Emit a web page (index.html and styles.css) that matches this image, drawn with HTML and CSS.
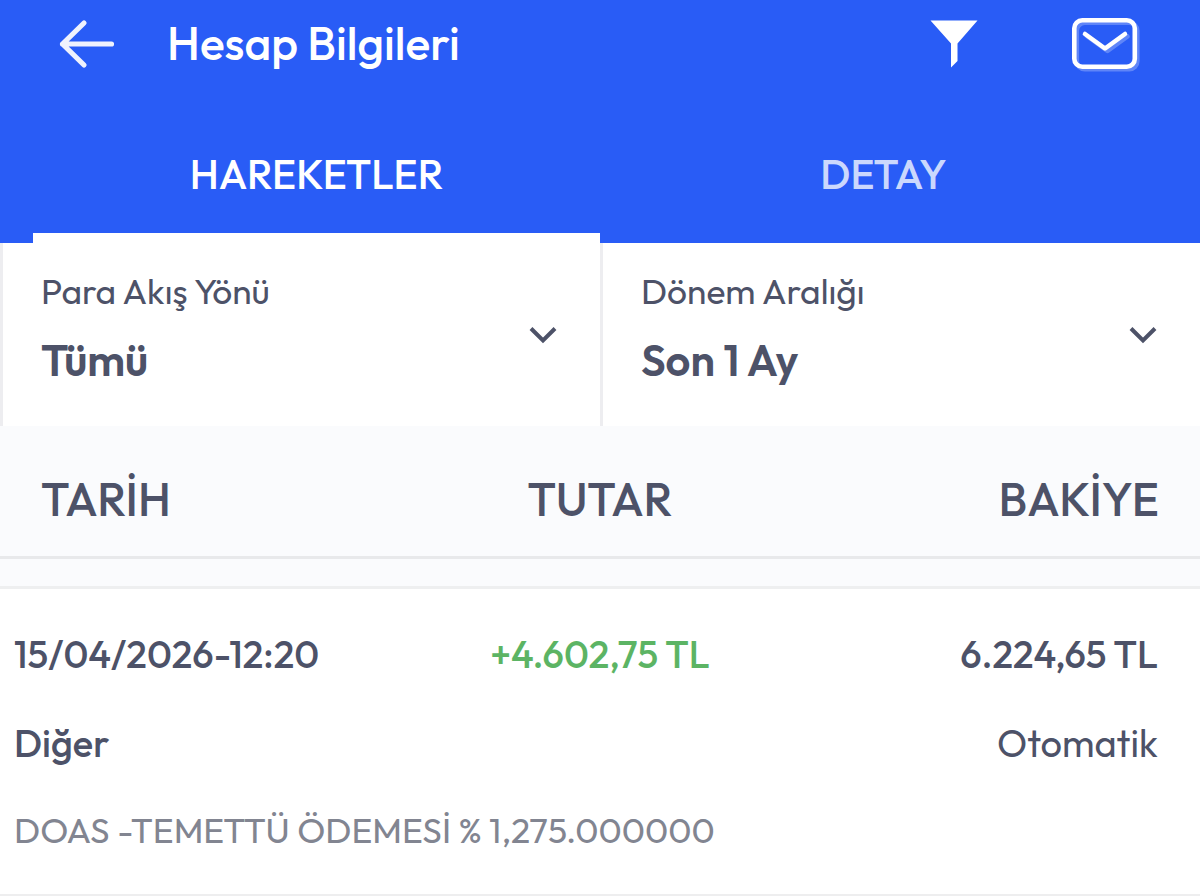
FILE: index.html
```
<!DOCTYPE html>
<html lang="tr">
<head>
    <meta charset="UTF-8">
    <meta name="viewport" content="width=device-width, initial-scale=1.0">
    <title>Hesap Bilgileri</title>
    <link rel="stylesheet" href="styles.css">
</head>
<body>
    <header class="header">
        <div class="app-bar">
            <svg class="back-icon" width="58" height="50" viewBox="0 0 58 50">
                <path d="M27 4 5.500 25 27 46M5.500 25H54.500" />
            </svg>
            <h1>Hesap Bilgileri</h1>
            <svg class="filter-icon" width="48" height="48" viewBox="0 0 48 48">
                <path d="M.5 .5H47.500L27.500 23.500V41L21 47.500V23.500Z" />
            </svg>
            <svg class="mail-icon" width="70" height="56" viewBox="0 0 70 56">
                <g class="mail-shadow" transform="translate(2.500 2.500)">
                    <rect x="4.300" y="4.300" width="60.500" height="46.500" rx="8" />
                    <path d="M15 18 35 32.500 55 18" />
                </g>
                <g>
                    <rect x="4.300" y="4.300" width="60.500" height="46.500" rx="8" />
                    <path d="M15 18 35 32.500 55 18" />
                </g>
            </svg>
        </div>
        <nav class="tabs">
            <div class="tab active">HAREKETLER</div>
            <div class="tab">DETAY</div>
        </nav>
    </header>

    <!-- Filters -->
    <section class="filters">
        <div class="filter">
            <div class="filter-text">
                <p class="filter-label">Para Akış Yönü</p>
                <p class="filter-value">Tümü</p>
            </div>
            <svg class="chevron" width="28" height="18" viewBox="0 0 28 18">
                <path d="M2 2.500 14 14.500 26 2.500" />
            </svg>
        </div>
        <div class="filter">
            <div class="filter-text">
                <p class="filter-label">Dönem Aralığı</p>
                <p class="filter-value">Son 1 Ay</p>
            </div>
            <svg class="chevron" width="28" height="18" viewBox="0 0 28 18">
                <path d="M2 2.500 14 14.500 26 2.500" />
            </svg>
        </div>
    </section>

    <!-- Column headings -->
    <section class="columns">
        <span>TARİH</span>
        <span class="col-amount">TUTAR</span>
        <span class="col-balance">BAKİYE</span>
    </section>

    <!-- Transactions -->
    <section class="transaction">
        <div class="row">
            <span>15/04/2026-12:20</span>
            <span class="amount">+4.602,75 TL</span>
            <span class="balance">6.224,65 TL</span>
        </div>
        <div class="row type-row">
            <span>Diğer</span>
            <span class="channel">Otomatik</span>
        </div>
        <p class="description">DOAS -TEMETTÜ ÖDEMESİ % 1,275.000000</p>
    </section>
</body>
</html>
```
FILE: styles.css
```
/* General Styling */
* {
    box-sizing: border-box;
}

body {
    margin: 0;
    font-family: Outfit, Lato, sans-serif;
    color: #4d5268;
    background-color: #fff;
    white-space: nowrap;
    overflow: hidden;
}

h1, p {
    margin: 0;
}

svg {
    display: block;
    flex: none;
    fill: none;
    stroke-linecap: round;
    stroke-linejoin: round;
}

/* Header */
.header {
    height: 243px;
    background-color: #295cf6;
    color: #fff;
}

.app-bar {
    display: flex;
    align-items: center;
    height: 87px;
    padding: 0 60px 0 57px;
}

.app-bar h1 {
    flex: 1;
    margin-left: 52px;
    padding-bottom: 2px;
    font-size: 46.2px;
    line-height: 54px;
    font-weight: 500;
}

.back-icon {
    stroke: #eff2fd;
    stroke-width: 5.2;
}

.filter-icon {
    margin-right: 92px;
    fill: #fff;
}

.mail-icon {
    stroke: #fff;
    stroke-width: 4.6;
}

.mail-shadow {
    opacity: 0.25;
}

/* Tabs */
.tabs {
    display: flex;
    height: 156px;
    padding: 0 33px;
}

.tab {
    flex: 1;
    padding-top: 62px;
    font-size: 40.8px;
    line-height: 51px;
    font-weight: 500;
    text-align: center;
    color: #cbd8fd;
}

.tab.active {
    color: #fff;
    border-bottom: 10px solid #fff;
}

/* Filters */
.filters {
    display: flex;
    height: 183px;
}

.filter {
    display: flex;
    flex: 1;
    justify-content: space-between;
    padding: 27px 43px 0 38px;
    border-left: 3px solid #ededf0;
}

.filter-label {
    font-size: 35.3px;
    line-height: 43px;
}

.filter-value {
    margin-top: 21px;
    font-size: 43.6px;
    line-height: 52px;
    font-weight: 600;
}

.chevron {
    margin-top: 56px;
    stroke: #4d5268;
    stroke-width: 4;
    stroke-linecap: butt;
    stroke-linejoin: miter;
}

/* Column Headings */
.columns {
    display: grid;
    grid-template-columns: repeat(3, 1fr);
    height: 133px;
    padding: 45px 41px 0;
    font-size: 46.2px;
    line-height: 56px;
    font-weight: 500;
    background-color: #fafbfd;
    border-bottom: 3px solid #e8e9eb;
}

.col-amount, .amount {
    text-align: center;
}

.col-balance, .balance, .channel {
    text-align: right;
}

/* Transactions */
.transaction {
    height: 337px;
    padding: 45px 42px 0 14px;
    background-color: #fff;
    border-top: 27px solid #fafbfd;
    border-bottom: 2px solid #eeeeef;
    box-shadow: inset 0 3px 0 #eeeff0;
}

.row {
    display: grid;
    grid-template-columns: 386px 400px 1fr;
    font-size: 38px;
    line-height: 46px;
    font-weight: 500;
}

.type-row {
    grid-template-columns: 1fr 1fr;
    margin-top: 43px;
}

.amount {
    color: #5cb464;
}

.channel {
    font-weight: 400;
}

.description {
    margin-top: 42px;
    font-size: 35.4px;
    line-height: 44px;
    color: #828591;
}
```
